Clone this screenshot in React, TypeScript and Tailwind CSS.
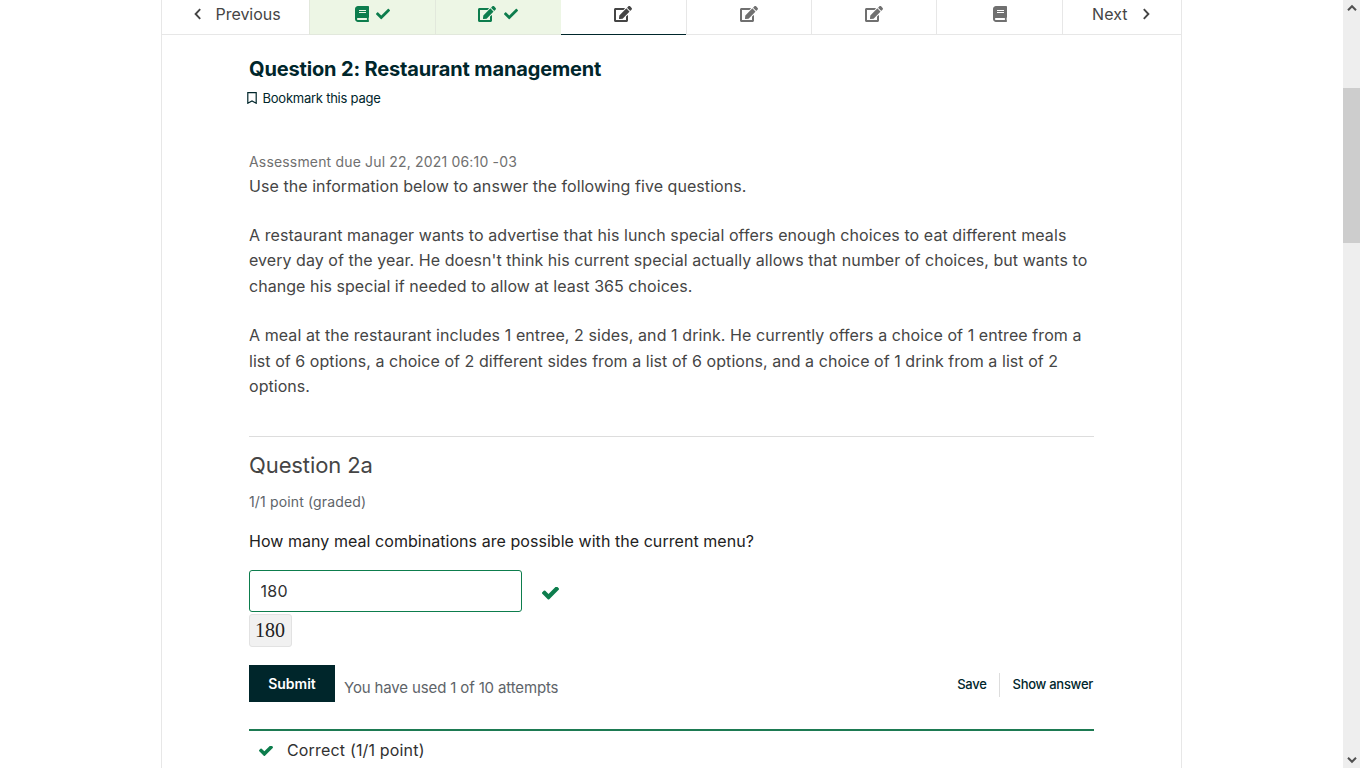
import React from "react";
import { FaBook, FaEdit, FaCheck } from "react-icons/fa";

function BoldCheck({ className }: { className: string }) {
  return (
    <svg viewBox="121 434 1550 1088" fill="currentColor" className={className}>
      <path d="M1671 566q0 40-28 68l-724 724-136 136q-28 28-68 28t-68-28l-136-136-362-362q-28-28-28-68t28-68l136-136q28-28 68-28t68 28l294 295 656-657q28-28 68-28t68 28l136 136q28 28 28 68z" />
    </svg>
  );
}

function Chevron({ d, className }: { d: string; className: string }) {
  return (
    <svg viewBox="0 0 12 12" fill="none" stroke="currentColor" className={className}>
      <path d={d} />
    </svg>
  );
}

function SequenceNav() {
  return (
    <nav className="flex h-[35px] text-base leading-[29px] text-[#454545]">
      <button className="flex w-[147px] shrink-0 items-start border-b border-[#e7e7e7] pl-[30px]">
        <Chevron d="M8.2 1.2 3.6 6l4.6 4.8" className="mt-2 size-3 stroke-[1.9]" />
        <span className="ml-[11.5px] -tracking-[0.03px]">Previous</span>
      </button>
      <div className="flex w-[126px] shrink-0 items-start justify-center gap-[7px] border-b border-l border-[#e2e8dc] bg-[#edf6e5] pt-1.5 text-[#0d7d4d]">
        <FaBook className="h-4 w-3.5" />
        <FaCheck className="mt-px size-3.5" />
      </div>
      <div className="flex w-[126px] shrink-0 items-start justify-center gap-2 border-b border-l border-[#e2e8dc] bg-[#edf6e5] pt-1.5 pr-px text-[#0d7d4d]">
        <FaEdit className="h-4 w-[18px]" />
        <FaCheck className="mt-px size-3.5" />
      </div>
      <div className="flex w-[125px] shrink-0 justify-center border-b border-[#00262b] pt-1.5 pr-0.5">
        <FaEdit className="h-4 w-[18px]" />
      </div>
      <div className="flex w-[125px] shrink-0 justify-center border-b border-l border-[#e7e7e7] pt-1.5 text-[#707070]">
        <FaEdit className="h-4 w-[18px]" />
      </div>
      <div className="flex w-[125px] shrink-0 justify-center border-b border-l border-[#e7e7e7] pt-1.5 text-[#707070]">
        <FaEdit className="h-4 w-[18px]" />
      </div>
      <div className="flex w-[126px] shrink-0 justify-center border-b border-l border-[#e7e7e7] pt-1.5 text-[#707070]">
        <FaBook className="h-4 w-3.5" />
      </div>
      <button className="flex flex-1 items-start border-b border-l border-[#e7e7e7] pl-[29px]">
        <span className="tracking-[0.1px]">Next</span>
        <Chevron d="M3.8 1.2 8.4 6l-4.6 4.8" className="mt-2 ml-3 size-3 stroke-[1.9]" />
      </button>
    </nav>
  );
}

function Scrollbar() {
  return (
    <div className="flex w-[17px] shrink-0 flex-col items-center bg-[#eeeeee] text-[#505050]">
      <Chevron d="M2 8.2 6 4.2l4 4" className="mt-[2px] size-3 stroke-2" />
      <div className="mt-[74px] h-[155px] w-full bg-[#cdcdcd]" />
      <Chevron d="M2 3.8l4 4 4-4" className="mt-auto mb-[2px] size-3 stroke-2" />
    </div>
  );
}

export default function App() {
  return (
    <div className="flex h-[768px] w-[1360px] overflow-hidden bg-white font-['Inter',sans-serif] text-[#454545]">
      <div className="flex flex-1 justify-center">
        <main className="w-[1021px] border-x border-[#e7e7e7]">
          <SequenceNav />
          <div className="ml-[87px] w-[845px]">
            <h1 className="mt-[20px] h-7 text-xl leading-7 font-bold -tracking-[0.15px] whitespace-nowrap text-[#00262b]">Question 2: Restaurant management</h1>
            <button className="-ml-0.5 mt-[5px] flex h-5 items-center text-[13px] leading-5 text-[#00262b]">
              <svg viewBox="0 0 10 12" fill="none" stroke="currentColor" strokeWidth="1.2" className="h-3 w-2.5">
                <path d="M.8.6h8.4v10.6L5 9 .8 11.2z" />
              </svg>
              <span className="ml-[5.5px] -tracking-[0.24px]">Bookmark this page</span>
            </button>
            <p className="mt-[44px] h-5 text-sm leading-5 tracking-[0.17px] text-[#707070]">Assessment due Jul 22, 2021 06:10 -03</p>
            <div className="mt-0.5 text-base leading-[25.5px] tracking-[0.05px] whitespace-nowrap">
              <p className="tracking-[0.06px]">Use the information below to answer the following five questions.</p>
              <p className="mt-[23.25px]">
                <span className="tracking-[0.08px]">A restaurant manager wants to advertise that his lunch special offers enough choices to eat different meals</span>
                <br />
                every day of the year. He doesn't think his current special actually allows that number of choices, but wants to
                <br />
                change his special if needed to allow at least 365 choices.
              </p>
              <p className="mt-[23.75px]">
                <span className="tracking-[0.08px]">A meal at the restaurant includes 1 entree, 2 sides, and 1 drink. He currently offers a choice of 1 entree from a</span>
                <br />
                list of 6 options, a choice of 2 different sides from a list of 6 options, and a choice of 1 drink from a list of 2
                <br />
                options.
              </p>
            </div>
            <hr className="mt-9 border-t border-[#dddddd]" />
            <h2 className="mt-3 h-8 text-[22px] leading-8 -tracking-[0.1px]">Question 2a</h2>
            <p className="mt-[11px] h-5 text-sm leading-5 tracking-[0.15px] text-[#5e6469]">1/1 point (graded)</p>
            <p className="mt-[17px] h-6 text-base leading-6 tracking-[0.05px] text-[#222]">How many meal combinations are possible with the current menu?</p>
            <div className="mt-[17px] flex">
              <input
                defaultValue="180"
                className="h-[42px] w-[273px] rounded-[3px] border border-[#0d7d4d] px-[10.5px] text-base tracking-[0.3px] text-[#313131] outline-none"
              />
              <BoldCheck className="mt-[17px] ml-[19.5px] h-[13px] w-[17px] text-[#0d7d4d]" />
            </div>
            <div className="mt-0.5 h-[33px] w-[43px] rounded-[3px] border border-[#e2e2e2] bg-[#f1f1f1] pr-px text-center font-['Liberation_Serif',serif] text-[20px] leading-[30px] text-[#222]">180</div>
            <div className="mt-[18px] flex h-[37px] items-start">
              <button className="h-[37px] w-[86px] bg-[#00262b] pt-px text-sm font-semibold text-white">Submit</button>
              <span className="mt-[13px] ml-[9px] text-[15px] leading-5 -tracking-[0.14px] text-[#5e6469]">You have used 1 of 10 attempts</span>
              <div className="mt-[8px] ml-auto flex h-6 items-center pr-px text-[13px] font-medium -tracking-[0.28px] text-[#00262b]">
                <button className="pr-3">Save</button>
                <button className="h-6 border-l border-[#dddddd] pl-[13px]">Show answer</button>
              </div>
            </div>
            <div className="mt-[27px] flex border-t-2 border-[#1d7a52] pt-[7px] text-base leading-6 text-[#313131]">
              <BoldCheck className="mt-2 ml-[10px] h-[10px] w-3.5 text-[#0d7d4d]" />
              <span className="ml-[14px] tracking-[0.17px]">Correct (1/1 point)</span>
            </div>
          </div>
        </main>
      </div>
      <Scrollbar />
    </div>
  );
}
